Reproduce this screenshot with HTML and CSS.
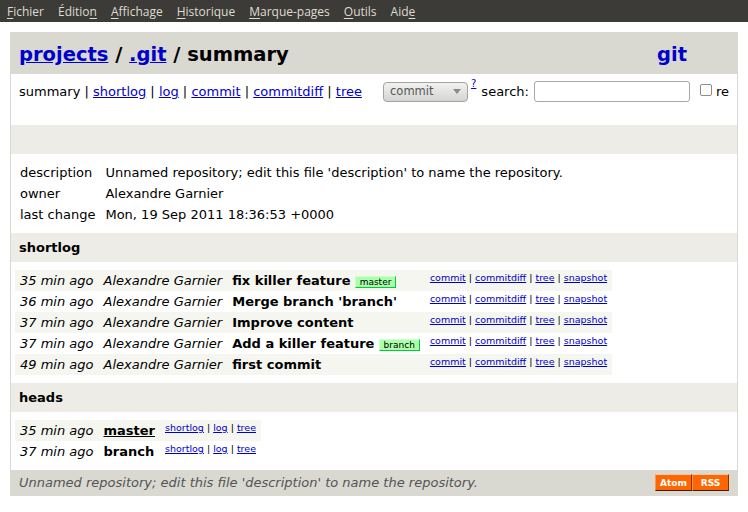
FILE: index.html
```html
<!DOCTYPE html>
<html>
<head>
<meta charset="utf-8">
<title>.git/summary</title>
<link rel="stylesheet" href="styles.css">
</head>
<body>
<div class="menubar">
  <span class="menu"><u>F</u>ichier</span>
  <span class="menu">Éditio<u>n</u></span>
  <span class="menu"><u>A</u>ffichage</span>
  <span class="menu"><u>H</u>istorique</span>
  <span class="menu"><u>M</u>arque-pages</span>
  <span class="menu"><u>O</u>utils</span>
  <span class="menu">Aid<u>e</u></span>
</div>
<div class="page">
  <div class="page_header">
    <span class="path"><a href="#">projects</a> / <a href="#">.git</a> / summary</span>
    <a class="logo" href="#">git</a>
  </div>
  <div class="page_nav">
    <div class="nav_row">
      <div class="nav_links">summary | <a href="#">shortlog</a> | <a href="#">log</a> | <a href="#">commit</a> | <a href="#">commitdiff</a> | <a href="#">tree</a></div>
      <form class="search">
        <span class="select"><span class="select_text">commit</span><span class="select_arrow"></span></span>
        <sup class="help"><a href="#">?</a></sup>
        <label class="search_label">search:</label>
        <input class="search_input" type="text">
        <input class="check" type="checkbox">
        <span class="re">re</span>
      </form>
    </div>
  </div>
  <div class="title">&nbsp;</div>
  <table class="projects_list">
    <tr><td>description</td><td>Unnamed repository; edit this file 'description' to name the repository.</td></tr>
    <tr><td>owner</td><td>Alexandre Garnier</td></tr>
    <tr><td>last change</td><td>Mon, 19 Sep 2011 18:36:53 +0000</td></tr>
  </table>
  <div class="title">shortlog</div>
  <table class="shortlog">
    <tr class="dark"><td><i>35 min ago</i></td><td><i>Alexandre Garnier</i></td><td><b>fix killer feature</b> <span class="head">master</span></td><td class="link"><a href="#">commit</a> | <a href="#">commitdiff</a> | <a href="#">tree</a> | <a href="#">snapshot</a></td></tr>
    <tr><td><i>36 min ago</i></td><td><i>Alexandre Garnier</i></td><td><b>Merge branch 'branch'</b></td><td class="link"><a href="#">commit</a> | <a href="#">commitdiff</a> | <a href="#">tree</a> | <a href="#">snapshot</a></td></tr>
    <tr class="dark"><td><i>37 min ago</i></td><td><i>Alexandre Garnier</i></td><td><b>Improve content</b></td><td class="link"><a href="#">commit</a> | <a href="#">commitdiff</a> | <a href="#">tree</a> | <a href="#">snapshot</a></td></tr>
    <tr><td><i>37 min ago</i></td><td><i>Alexandre Garnier</i></td><td><b>Add a killer feature</b> <span class="head">branch</span></td><td class="link"><a href="#">commit</a> | <a href="#">commitdiff</a> | <a href="#">tree</a> | <a href="#">snapshot</a></td></tr>
    <tr class="dark"><td><i>49 min ago</i></td><td><i>Alexandre Garnier</i></td><td><b>first commit</b></td><td class="link"><a href="#">commit</a> | <a href="#">commitdiff</a> | <a href="#">tree</a> | <a href="#">snapshot</a></td></tr>
  </table>
  <div class="title">heads</div>
  <table class="heads">
    <tr class="dark"><td><i>35 min ago</i></td><td><b class="current">master</b></td><td class="link"><a href="#">shortlog</a> | <a href="#">log</a> | <a href="#">tree</a></td></tr>
    <tr><td><i>37 min ago</i></td><td><b>branch</b></td><td class="link"><a href="#">shortlog</a> | <a href="#">log</a> | <a href="#">tree</a></td></tr>
  </table>
  <div class="page_footer">
    <span class="footer_text">Unnamed repository; edit this file 'description' to name the repository.</span>
    <span class="feeds"><a class="rss_logo" href="#">Atom</a><a class="rss_logo" href="#">RSS</a></span>
  </div>
</div>
</body>
</html>
```
FILE: styles.css
```css
html, body {
  margin: 0;
  padding: 0;
  background: #ffffff;
}
body {
  font-family: "DejaVu Sans", sans-serif;
  font-size: 13px;
  line-height: 17px;
  color: #000;
}
a { color: #0000cc; }

.menubar {
  height: 22px;
  background: #3c3b37;
  display: flex;
  align-items: center;
  padding-left: 7px;
  font-family: "Open Sans", "DejaVu Sans", sans-serif;
  font-size: 12px;
  color: #dfdbd2;
}
.menu { margin-right: 14px; }
.menu u { text-decoration-thickness: 1px; text-underline-offset: 2px; }

.page {
  margin: 10px;
  border: 1px solid #d9d8d1;
}

.page_header {
  height: 23px;
  padding: 10px 8px 8px 8px;
  background: #d9d8d1;
  font-size: 19.5px;
  line-height: 23px;
  font-weight: bold;
  display: flex;
  justify-content: space-between;
}
.logo {
  width: 72px;
  text-decoration: none;
}

.page_nav {
  padding: 9px 8px 7px 8px;
  height: 35px;
}
.nav_row {
  display: flex;
  justify-content: space-between;
  align-items: center;
  height: 17px;
}
.search {
  display: flex;
  align-items: center;
  margin: 0;
}
.select {
  box-sizing: border-box;
  width: 85px;
  height: 20px;
  border: 1px solid #a3a3a0;
  border-radius: 4px;
  background: linear-gradient(#f2f2f1, #d4d4d2);
  display: flex;
  align-items: center;
  justify-content: space-between;
  padding: 0 6px 0 6px;
  font-size: 11.5px;
  color: #555;
}
.select_arrow {
  width: 0;
  height: 0;
  border-left: 4px solid transparent;
  border-right: 4px solid transparent;
  border-top: 5px solid #8a8a88;
}
.help {
  font-size: 10px;
  line-height: 10px;
  margin: 0 5px 0 3px;
  align-self: flex-start;
  position: relative;
  top: -2px;
}
.search_label { margin-right: 5px; }
.search_input {
  box-sizing: border-box;
  width: 156px;
  height: 21px;
  border: 1px solid #a7a7a5;
  border-radius: 3px;
  margin: 0;
  padding: 0;
  background: #fff;
}
.check {
  appearance: none;
  -webkit-appearance: none;
  box-sizing: border-box;
  width: 12px;
  height: 12px;
  margin: 0 4px 0 10px;
  border: 1px solid #8c8c8a;
  border-radius: 2px;
  background: #fff;
  position: relative;
  top: -2px;
}

.title {
  padding: 6px 8px;
  font-weight: bold;
  background: #edece6;
}

table {
  padding: 8px 4px;
  border-spacing: 0;
}
td {
  padding: 2px 5px;
  vertical-align: top;
  white-space: nowrap;
}
tr.dark { background: #f6f6f0; }
td.link {
  font-size: 9.5px;
  line-height: 12px;
}

.head {
  padding: 0 4px;
  font-size: 9px;
  line-height: 12px;
  font-weight: normal;
  border: 1px solid;
  background: #aaffaa;
  border-color: #ccffcc #00cc33 #00cc33 #ccffcc;
}

.current { text-decoration: underline; }

.page_footer {
  height: 17px;
  padding: 4px 8px;
  background: #d9d8d1;
  display: flex;
  justify-content: space-between;
}
.footer_text {
  color: #555555;
  font-style: italic;
}
.feeds { display: flex; }
.rss_logo {
  display: block;
  width: 35px;
  padding: 3px 0;
  line-height: 10px;
  border: 1px solid;
  border-color: #fcc7a5 #7d3302 #3e1a01 #ff954e;
  color: #ffffff;
  background: #ff6600;
  font-weight: bold;
  font-size: 9.1px;
  text-align: center;
  text-decoration: none;
}
```
